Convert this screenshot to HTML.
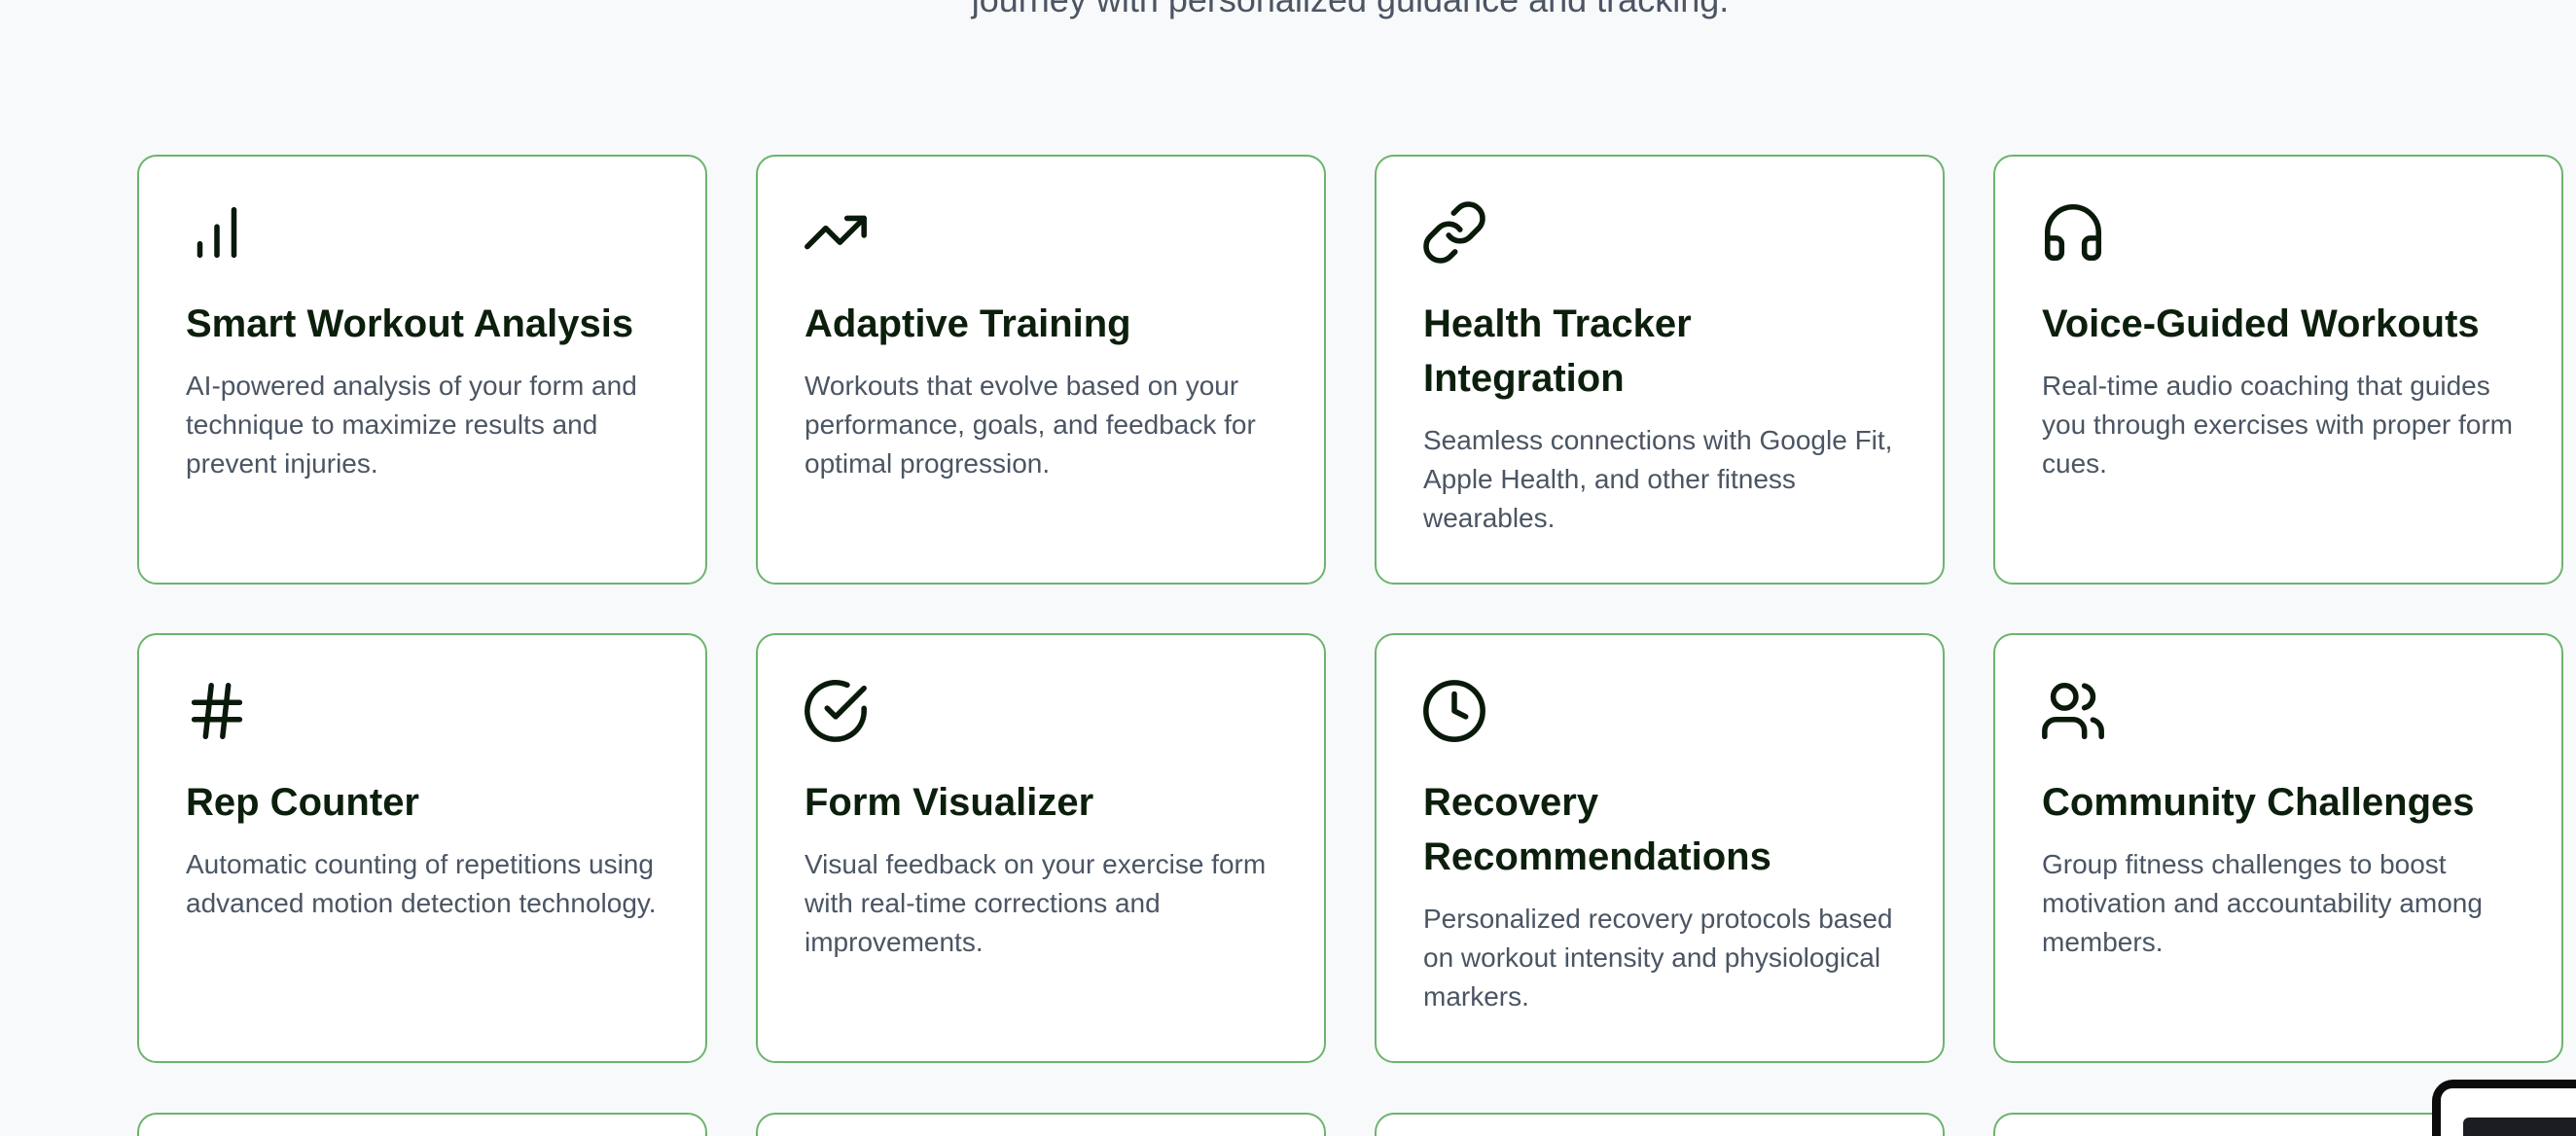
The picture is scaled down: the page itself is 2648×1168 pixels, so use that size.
<!DOCTYPE html>
<html><head><meta charset="utf-8"><style>
*{margin:0;padding:0;box-sizing:border-box}
html,body{width:2648px;height:1168px;overflow:hidden;background:#f8f9fb;font-family:"Liberation Sans",Arial,sans-serif}
#wrap{position:relative;width:2648px;height:1168px;overflow:hidden;background:#f8f9fb}
.sub{position:absolute;left:0;width:2776px;top:-25px;text-align:center;font-size:36px;line-height:50px;color:#4b5563}
.card{position:absolute;width:586px;height:442px;background:#fff;border:2px solid #6db46d;border-radius:20px}
.card.r3{height:24px;border-bottom:none;border-radius:20px 20px 0 0}
.card svg{position:absolute;left:45px;top:43px;width:70px;height:70px;fill:none;stroke:#0a1a0a;stroke-width:1.9;stroke-linecap:round;stroke-linejoin:round}
.card h3{font-size:40px;line-height:56px;font-weight:bold;color:#0c1f0c;margin-bottom:16px}
.card p{font-size:28px;line-height:40px;color:#4b5563}
.card .t{position:absolute;left:48px;top:144px;width:488px}
.lap{position:absolute;left:2500px;top:1110px;width:148px;height:58px;background:#0b0b0b;border-radius:22px 0 0 0;overflow:hidden}
.lap .s{position:absolute;left:9px;top:9px;right:0;bottom:0;background:#fff;border-radius:12px 0 0 0}
.lap .w{position:absolute;left:23px;top:30px;right:0;bottom:0;background:#1b1d22;border-radius:6px 0 0 0}
</style></head><body><div id="wrap">
<div class="sub">journey with personalized guidance and tracking.</div>

<div class="card" style="left:141px;top:159px"><svg viewBox="0 0 24 24"><path d="M12 20V10M18 20V4M6 20v-4"/></svg><div class="t"><h3>Smart Workout Analysis</h3><p>AI-powered analysis of your form and technique to maximize results and prevent injuries.</p></div></div>
<div class="card" style="left:777px;top:159px"><svg viewBox="0 0 24 24"><polyline points="22 7 13.5 15.5 8.5 10.5 2 17"/><polyline points="16 7 22 7 22 13"/></svg><div class="t"><h3>Adaptive Training</h3><p>Workouts that evolve based on your performance, goals, and feedback for optimal progression.</p></div></div>
<div class="card" style="left:1413px;top:159px"><svg viewBox="0 0 24 24"><path d="M10 13a5 5 0 0 0 7.54.54l3-3a5 5 0 0 0-7.07-7.070l-1.72 1.71"/><path d="M14 11a5 5 0 0 0-7.54-.54l-3 3a5 5 0 0 0 7.07 7.07l1.71-1.71"/></svg><div class="t"><h3>Health Tracker Integration</h3><p>Seamless connections with Google Fit, Apple Health, and other fitness wearables.</p></div></div>
<div class="card" style="left:2049px;top:159px"><svg viewBox="0 0 24 24"><path d="M3 14h3a2 2 0 0 1 2 2v3a2 2 0 0 1-2 2H5a2 2 0 0 1-2-2v-7a9 9 0 0 1 18 0v7a2 2 0 0 1-2 2h-1a2 2 0 0 1-2-2v-3a2 2 0 0 1 2-2h3"/></svg><div class="t"><h3>Voice-Guided Workouts</h3><p>Real-time audio coaching that guides you through exercises with proper form cues.</p></div></div>

<div class="card" style="left:141px;top:651px"><svg viewBox="0 0 24 24"><path d="M4 9h16M4 15h16M10 3L8 21M16 3l-2 18"/></svg><div class="t"><h3>Rep Counter</h3><p>Automatic counting of repetitions using advanced motion detection technology.</p></div></div>
<div class="card" style="left:777px;top:651px"><svg viewBox="0 0 24 24"><path d="M22 11.08V12a10 10 0 1 1-5.93-9.14"/><polyline points="22 4 12 14.01 9 11.01"/></svg><div class="t"><h3>Form Visualizer</h3><p>Visual feedback on your exercise form with real-time corrections and improvements.</p></div></div>
<div class="card" style="left:1413px;top:651px"><svg viewBox="0 0 24 24"><circle cx="12" cy="12" r="10"/><polyline points="12 6 12 12 16 14"/></svg><div class="t"><h3>Recovery Recommendations</h3><p>Personalized recovery protocols based on workout intensity and physiological markers.</p></div></div>
<div class="card" style="left:2049px;top:651px"><svg viewBox="0 0 24 24"><path d="M16 21v-2a4 4 0 0 0-4-4H6a4 4 0 0 0-4 4v2"/><circle cx="9" cy="7" r="4"/><path d="M22 21v-2a4 4 0 0 0-3-3.87M16 3.13a4 4 0 0 1 0 7.75"/></svg><div class="t"><h3>Community Challenges</h3><p>Group fitness challenges to boost motivation and accountability among members.</p></div></div>

<div class="card r3" style="left:141px;top:1144px"></div>
<div class="card r3" style="left:777px;top:1144px"></div>
<div class="card r3" style="left:1413px;top:1144px"></div>
<div class="card r3" style="left:2049px;top:1144px"></div>

<div class="lap"><div class="s"><div class="w"></div></div></div>
</div></body></html>
